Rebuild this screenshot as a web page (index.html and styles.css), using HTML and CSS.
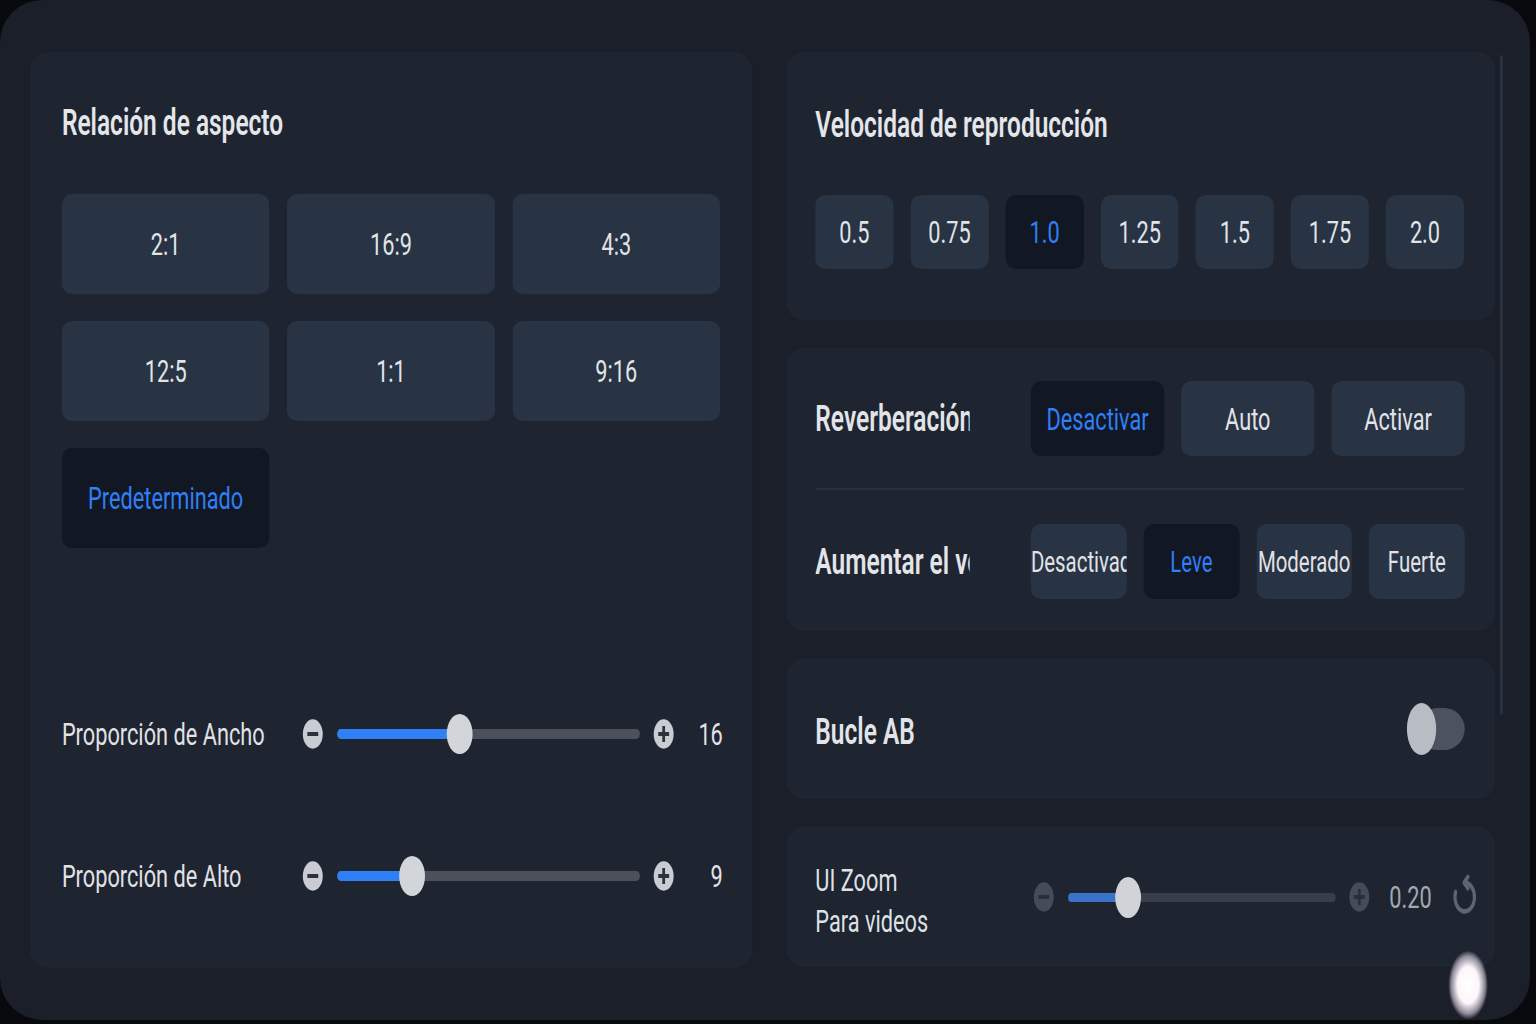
FILE: index.html
```html
<!DOCTYPE html>
<html lang="es">
<head>
<meta charset="utf-8">
<title>Ajustes de reproducción</title>
<link rel="stylesheet" href="styles.css">
</head>
<body>

<div class="stage">
	<div class="panel">

		<section class="card aspect">
			<h2 class="card-title">Relación de aspecto</h2>
			<div class="ratio-grid">
				<button class="chip tall">2:1</button>
				<button class="chip tall">16:9</button>
				<button class="chip tall">4:3</button>
				<button class="chip tall">12:5</button>
				<button class="chip tall">1:1</button>
				<button class="chip tall">9:16</button>
				<button class="chip tall active">Predeterminado</button>
			</div>

			<div class="ratio-sliders">
				<div class="slider-row">
					<span class="slider-label">Proporción de Ancho</span>
					<svg class="step" viewBox="0 0 24 24"><circle cx="12" cy="12" r="11" class="step-bg"/><rect x="6" y="10.5" width="12" height="3" class="step-sign"/></svg>
					<div class="track"><div class="fill" style="width:40.4%"></div><div class="thumb" style="left:40.4%"></div></div>
					<svg class="step plus" viewBox="0 0 24 24"><circle cx="12" cy="12" r="11" class="step-bg"/><rect x="6" y="10.5" width="12" height="3" class="step-sign"/><rect x="10.5" y="6" width="3" height="12" class="step-sign"/></svg>
					<span class="slider-value">16</span>
				</div>
				<div class="slider-row">
					<span class="slider-label">Proporción de Alto</span>
					<svg class="step" viewBox="0 0 24 24"><circle cx="12" cy="12" r="11" class="step-bg"/><rect x="6" y="10.5" width="12" height="3" class="step-sign"/></svg>
					<div class="track"><div class="fill" style="width:24.7%"></div><div class="thumb" style="left:24.7%"></div></div>
					<svg class="step plus" viewBox="0 0 24 24"><circle cx="12" cy="12" r="11" class="step-bg"/><rect x="6" y="10.5" width="12" height="3" class="step-sign"/><rect x="10.5" y="6" width="3" height="12" class="step-sign"/></svg>
					<span class="slider-value">9</span>
				</div>
			</div>
		</section>

		<div class="side">
			<div class="side-cards">

				<section class="card speed">
					<h2 class="card-title">Velocidad de reproducción</h2>
					<div class="speed-list">
						<button class="chip">0.5</button>
						<button class="chip">0.75</button>
						<button class="chip active">1.0</button>
						<button class="chip">1.25</button>
						<button class="chip">1.5</button>
						<button class="chip">1.75</button>
						<button class="chip">2.0</button>
					</div>
				</section>

				<section class="card audio">
					<div class="opt-row divided">
						<span class="opt-label">Reverberación</span>
						<div class="opt-choices">
							<button class="chip mid active">Desactivar</button>
							<button class="chip mid">Auto</button>
							<button class="chip mid">Activar</button>
						</div>
					</div>
					<div class="opt-row">
						<span class="opt-label">Aumentar el volumen</span>
						<div class="opt-choices small">
							<button class="chip mid">Desactivado</button>
							<button class="chip mid active">Leve</button>
							<button class="chip mid">Moderado</button>
							<button class="chip mid">Fuerte</button>
						</div>
					</div>
				</section>

				<section class="card loop">
					<span class="opt-label">Bucle AB</span>
					<div class="toggle"><span class="toggle-track"></span><span class="toggle-knob"></span></div>
				</section>

				<section class="card zoom">
					<div class="zoom-label">UI Zoom<br>Para videos</div>
					<div class="zoom-slider">
						<svg class="step dim" viewBox="0 0 24 24"><circle cx="12" cy="12" r="11" class="step-bg"/><rect x="6" y="10.5" width="12" height="3" class="step-sign"/></svg>
						<div class="track thin"><div class="fill" style="width:22.3%"></div><div class="thumb" style="left:22.3%"></div></div>
						<svg class="step dim plus" viewBox="0 0 24 24"><circle cx="12" cy="12" r="11" class="step-bg"/><rect x="6" y="10.5" width="12" height="3" class="step-sign"/><rect x="10.5" y="6" width="3" height="12" class="step-sign"/></svg>
						<span class="zoom-value">0.20</span>
						<svg class="reset" viewBox="0 0 24 24"><path d="M12 4.5a7.5 7.5 0 1 1-7 4.8"/><path d="M14.5 1.5L11.5 4.5L14.5 7.5"/></svg>
					</div>
				</section>

			</div>
			<div class="scrollbar"><div class="scroll-thumb"></div></div>
		</div>

		<div class="touch-dot"></div>
	</div>
</div>

</body>
</html>
```

FILE: styles.css
```css
/* the capture is squeezed sideways, so the page is laid out wide and scaled in x */
html, body {
	margin: 0;
	padding: 0;
	overflow: hidden;
	background: #07090c;
}

.stage {
	width: 2258px;
	height: 1024px;
	transform: scaleX(0.68);
	transform-origin: 0 0;
	font-family: Roboto, "Liberation Sans", sans-serif;
	color: #e2e4e8;
}

.panel {
	position: relative;
	box-sizing: border-box;
	width: 2250px;
	height: 1020px;
	padding: 52px 0 52px 44px;
	display: flex;
	gap: 50px;
	background: #1a1f2a;
	border-radius: 62px / 42px;
}

.card {
	box-sizing: border-box;
	background: #1e2430;
	border-radius: 27px / 18px;
}

.card-title {
	margin: 0;
	font-size: 36px;
	line-height: 44px;
	font-weight: 600;
	color: #e4e6ea;
	white-space: nowrap;
}

/* buttons */
.chip {
	border: 0;
	padding: 0;
	margin: 0;
	height: 74px;
	background: #283344;
	border-radius: 15px / 10px;
	font-family: inherit;
	font-size: 32px;
	color: #e1e3e7;
	white-space: nowrap;
	overflow: hidden;
	text-align: center;
}
.chip.tall { height: 100px; }
.chip.mid { height: 75px; }
.chip.active {
	background: #111723;
	color: #2f7ff7;
}

/* left card */
.aspect {
	width: 1062px;
	padding: 49px 43px 0 47px;
}

.ratio-grid {
	margin-top: 49px;
	margin-right: 4px;
	display: grid;
	grid-template-columns: repeat(3, 1fr);
	column-gap: 26px;
	row-gap: 27px;
}

.ratio-sliders {
	margin-top: 166px;
	display: flex;
	flex-direction: column;
	gap: 102px;
}

.slider-row {
	display: flex;
	align-items: center;
	height: 40px;
}

.slider-label {
	width: 353px;
	font-size: 32px;
	color: #e0e2e6;
	white-space: nowrap;
}

.step {
	flex: none;
	width: 32px;
	height: 32px;
}
.step-bg { fill: #c9ccd2; }
.step-sign { fill: #2c313b; }
.step.dim .step-bg { fill: #454b57; }
.step.dim .step-sign { fill: #2a2f39; }

.track {
	position: relative;
	flex: 1;
	height: 10px;
	margin: 0 19px 0 20px;
	background: #4b505b;
	border-radius: 5px;
}
.track .fill {
	height: 100%;
	background: #2f7ff7;
	border-radius: 5px 0 0 5px;
}
.track .thumb {
	position: absolute;
	top: -15px;
	width: 38px;
	height: 40px;
	margin-left: -19px;
	background: #d2d5da;
	border-radius: 50%;
}
.track.thin {
	height: 9px;
	background: #383e4a;
}
.track.thin .fill { background: #3b72cb; }
.track.thin .thumb {
	top: -16px;
	height: 41px;
	background: #d0d3d8;
}

.slider-value {
	width: 71px;
	text-align: right;
	font-size: 32px;
	color: #e0e2e6;
}

/* right column */
.side {
	display: flex;
	gap: 7px;
}

.side-cards {
	width: 1043px;
	display: flex;
	flex-direction: column;
	gap: 28px;
}

.scrollbar {
	width: 4px;
}
.scroll-thumb {
	margin-top: 3px;
	height: 660px;
	background: #2c3442;
	border-radius: 2px;
}

.speed {
	height: 268px;
	padding: 51px 46px 0 43px;
}

.speed-list {
	margin-top: 48px;
	display: flex;
	gap: 25px;
}
.speed-list .chip { flex: 1; }

.audio {
	padding: 0 45px 0 43px;
}

.opt-row {
	display: flex;
	align-items: center;
	padding: 34px 0 32px;
}
.opt-row.divided {
	border-bottom: 2px solid #29303d;
	padding: 33px 0 32px;
}

.opt-label {
	flex: none;
	width: 227px;
	margin-right: 90px;
	overflow: hidden;
	white-space: nowrap;
	font-size: 36px;
	font-weight: 600;
	color: #e2e4e8;
}

.opt-choices {
	flex: 1;
	display: flex;
	gap: 25px;
}
.opt-choices .chip {
	flex: 1;
	min-width: 0;
}
.opt-choices.small .chip { font-size: 30px; }

.loop {
	height: 140px;
	padding: 6px 45px 0 43px;
	display: flex;
	align-items: center;
	justify-content: space-between;
}
.loop .opt-label { width: auto; }

.toggle {
	position: relative;
	width: 85px;
	height: 52px;
	margin-top: -6px;
}
.toggle-track {
	position: absolute;
	right: 0;
	top: 5px;
	width: 70px;
	height: 42px;
	background: #4c525e;
	border-radius: 30px / 21px;
}
.toggle-knob {
	position: absolute;
	left: 0;
	top: 0;
	width: 43px;
	height: 52px;
	background: #b8bdc4;
	border-radius: 50%;
}

.zoom {
	height: 140px;
	padding: 0 22px 0 43px;
	display: flex;
	align-items: center;
}

.zoom-label {
	width: 317px;
	margin-top: 7px;
	font-size: 32px;
	line-height: 41px;
	color: #dfe1e5;
	white-space: nowrap;
}

.zoom-slider {
	flex: 1;
	display: flex;
	align-items: center;
	padding-left: 3px;
}

.zoom-value {
	width: 62px;
	margin-left: 28px;
	font-size: 32px;
	color: #a3a8b1;
}

.reset {
	flex: none;
	width: 46px;
	height: 50px;
	margin-left: 26px;
	fill: none;
	stroke: #5e6571;
	stroke-width: 2.4;
	stroke-linecap: round;
	stroke-linejoin: round;
}

.touch-dot {
	position: absolute;
	left: 2130px;
	top: 951px;
	width: 58px;
	height: 68px;
	border-radius: 50%;
	background: radial-gradient(ellipse at center, #fff 0, #fdf6fb 38%, rgba(240, 225, 240, 0.55) 60%, rgba(240, 225, 240, 0) 72%);
}
```
